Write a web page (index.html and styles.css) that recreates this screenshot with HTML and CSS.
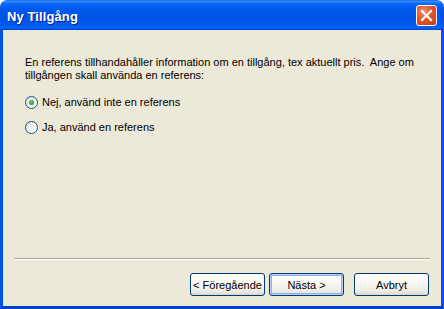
FILE: index.html
```html
<!DOCTYPE html>
<html lang="sv">
<head>
<meta charset="utf-8">
<title>Ny Tillgång</title>
<link rel="stylesheet" href="styles.css">
</head>
<body>
<div class="window">
  <div class="titlebar">
    <span class="title">Ny Tillgång</span>
    <span class="close" aria-label="Stäng">
      <svg width="13" height="13" viewBox="0 0 13 13"><path d="M2 2 L11 11 M11 2 L2 11" stroke="#fff" stroke-width="2.2" stroke-linecap="square"/></svg>
    </span>
  </div>
  <div class="content">
    <p class="desc">En referens tillhandahåller information om en tillgång, tex aktuellt pris.&nbsp; Ange om tillgången skall använda en referens:</p>
    <div class="options">
      <label class="option"><span class="radio checked"></span><span>Nej, använd inte en referens</span></label>
      <label class="option"><span class="radio"></span><span>Ja, använd en referens</span></label>
    </div>
    <div class="spacer"></div>
    <div class="separator"></div>
    <div class="buttons">
      <button class="btn">&lt; Föregående</button>
      <button class="btn default">Nästa &gt;</button>
      <button class="btn cancel">Avbryt</button>
    </div>
  </div>
</div>
</body>
</html>
```
FILE: styles.css
```css
html, body {
  margin: 0;
  padding: 0;
  background: #ffffff;
}
.window {
  width: 444px;
  height: 309px;
  display: flex;
  flex-direction: column;
  font-family: "Liberation Sans", Arial, sans-serif;
  font-size: 11px;
  color: #000;
}
.titlebar {
  height: 30px;
  box-sizing: border-box;
  padding: 3px 7px 0 7px;
  display: flex;
  align-items: center;
  justify-content: space-between;
  border-radius: 7px 7px 0 0;
  background: linear-gradient(to bottom, #0a5fef 0%, #3d8ff8 4%, #0a68f6 12%, #0058ee 28%, #0054e3 60%, #005af0 84%, #0066fc 92%, #0043d0 100%);
}
.title {
  color: #fff;
  font-weight: bold;
  font-size: 13px;
  text-shadow: 1px 1px 0 #0a1e8a;
  letter-spacing: 0.1px;
}
.close {
  width: 21px;
  height: 21px;
  box-sizing: border-box;
  border: 1px solid #fff;
  border-radius: 3px;
  align-self: flex-start;
  margin-top: 2px;
  display: flex;
  align-items: center;
  justify-content: center;
  background: radial-gradient(circle at 35% 30%, #f28f70 0%, #e2532c 45%, #c83c14 100%);
}
.content {
  flex: 1;
  display: flex;
  flex-direction: column;
  background: #ece9d8;
  border-left: 3px solid #0054e3;
  border-right: 3px solid #0a50ee;
  border-bottom: 3px solid #0041c8;
  padding: 26px 12px 10px 22px;
}
.desc {
  margin: 0;
  line-height: 13px;
}
.options {
  margin-top: 13px;
  display: flex;
  flex-direction: column;
  gap: 11px;
}
.option {
  display: flex;
  align-items: center;
  gap: 4px;
  height: 14px;
}
.radio {
  width: 13px;
  height: 13px;
  box-sizing: border-box;
  border: 1px solid #1c5180;
  border-radius: 50%;
  background: linear-gradient(135deg, #dcdcd7 0%, #f2f2ef 50%, #ffffff 100%);
  display: flex;
  align-items: center;
  justify-content: center;
}
.radio.checked::after {
  content: "";
  width: 5px;
  height: 5px;
  border-radius: 50%;
  background: radial-gradient(circle at 40% 40%, #5fd35f 0%, #21a121 70%);
}
.spacer {
  flex: 1;
}
.separator {
  height: 1px;
  margin: 0 -1px 0 -11px;
  background: #aca899;
  border-bottom: 1px solid #ffffff;
}
.buttons {
  margin-top: 13px;
  display: flex;
  justify-content: flex-end;
  gap: 4px;
}
.btn {
  width: 75px;
  height: 23px;
  box-sizing: border-box;
  border: 1px solid #003c74;
  border-radius: 3px;
  background: linear-gradient(to bottom, #ffffff 0%, #f6f6f3 50%, #eae9e2 85%, #d8d5c9 100%);
  font-family: "Liberation Sans", Arial, sans-serif;
  font-size: 11px;
  color: #000;
  padding: 0;
}
.btn.default {
  box-shadow: inset 0 0 0 1px #b8cff6, inset 0 0 0 2px #8fb0ea;
}
.btn.cancel {
  margin-left: 6px;
}
```
